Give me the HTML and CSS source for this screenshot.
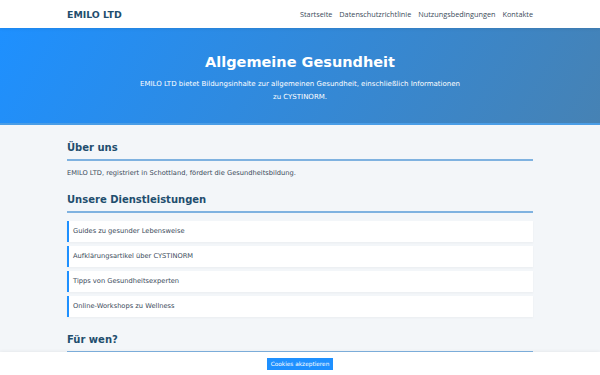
FILE: index.html
```html
<!DOCTYPE html>
<html lang="de">
<head>
  <meta charset="UTF-8">
  <title>EMILO LTD – Allgemeine Gesundheit</title>
  <link rel="stylesheet" href="styles.css">
</head>
<body>
  <header class="site-header">
    <div class="container header-inner">
      <div class="logo">EMILO LTD</div>
      <nav class="nav">
        <a href="#">Startseite</a>
        <a href="#">Datenschutzrichtlinie</a>
        <a href="#">Nutzungsbedingungen</a>
        <a href="#">Kontakte</a>
      </nav>
    </div>
  </header>

  <section class="hero">
    <h1 class="hero-title">Allgemeine Gesundheit</h1>
    <p class="hero-text">EMILO LTD bietet Bildungsinhalte zur allgemeinen Gesundheit, einschließlich Informationen zu CYSTINORM.</p>
  </section>

  <main class="container main">
    <h2 class="section-title">Über uns</h2>
    <p class="text">EMILO LTD, registriert in Schottland, fördert die Gesundheitsbildung.</p>

    <h2 class="section-title">Unsere Dienstleistungen</h2>
    <ul class="service-list">
      <li class="service">Guides zu gesunder Lebensweise</li>
      <li class="service">Aufklärungsartikel über CYSTINORM</li>
      <li class="service">Tipps von Gesundheitsexperten</li>
      <li class="service">Online-Workshops zu Wellness</li>
    </ul>

    <h2 class="section-title">Für wen?</h2>
    <p class="text">Für alle, die mehr über ihre Gesundheit erfahren möchten.</p>
  </main>

  <div class="cookie-bar">
    <button class="cookie-button">Cookies akzeptieren</button>
  </div>
</body>
</html>
```

FILE: styles.css
```css
:root {
  --primary: #1e90ff;
  --primary-end: #4682b4;
  --heading: #1f4e6e;
  --text: #3a4a5a;
  --line: #7fb2e0;
  --bg: #f3f6f9;
}

body {
  margin: 0;
  font-family: "DejaVu Sans", Verdana, sans-serif;
  background-color: var(--bg);
  color: var(--text);
}

.container {
  width: 466px;
  margin: 0 auto;
}

.site-header {
  background-color: #ffffff;
  box-shadow: 0 1px 3px rgba(0, 0, 0, 0.08);
  position: relative;
  z-index: 1;
}

.header-inner {
  height: 28px;
  display: flex;
  align-items: center;
  justify-content: space-between;
}

.logo {
  font-size: 9.4px;
  font-weight: bold;
  color: var(--heading);
}

.nav {
  display: flex;
  gap: 7px;
}

.nav a {
  font-family: "Open Sans", sans-serif;
  font-size: 7.3px;
  color: #3a4a5a;
  text-decoration: none;
}

.hero {
  background: linear-gradient(120deg, var(--primary), var(--primary-end));
  color: #ffffff;
  text-align: center;
  padding: 26px 0 19px;
  border-bottom: 2px solid #4a9de6;
}

.hero-title {
  margin: 0 0 7px;
  font-size: 14.5px;
  line-height: 17px;
  font-weight: bold;
}

.hero-text {
  margin: 0 auto;
  width: 326px;
  font-size: 7px;
  line-height: 13px;
}

.main {
  padding: 17px 0 40px;
}

.section-title {
  margin: 0 0 8px;
  font-size: 10px;
  line-height: 12px;
  font-weight: bold;
  color: var(--heading);
  padding-bottom: 5px;
  border-bottom: 2px solid var(--line);
}

.text {
  margin: 0 0 16px;
  font-size: 6.7px;
  line-height: 9px;
}

.service-list {
  list-style: none;
  margin: 0 0 17px;
  padding: 0;
  display: flex;
  flex-direction: column;
  gap: 4px;
}

.service {
  background-color: #ffffff;
  border-left: 2px solid var(--primary);
  padding: 6px 7px 6px 4px;
  font-size: 6.7px;
  line-height: 9px;
  box-shadow: 0 1px 2px rgba(0, 0, 0, 0.04);
}

.cookie-bar {
  position: fixed;
  left: 0;
  right: 0;
  bottom: 0;
  height: 23px;
  background-color: #ffffff;
  display: flex;
  align-items: center;
  justify-content: center;
  box-shadow: 0 -1px 3px rgba(0, 0, 0, 0.05);
}

.cookie-button {
  background-color: var(--primary);
  color: #ffffff;
  border: none;
  font-family: "DejaVu Sans", sans-serif;
  font-size: 5.8px;
  white-space: nowrap;
  padding: 0;
  height: 12px;
  width: 66px;
}
```
